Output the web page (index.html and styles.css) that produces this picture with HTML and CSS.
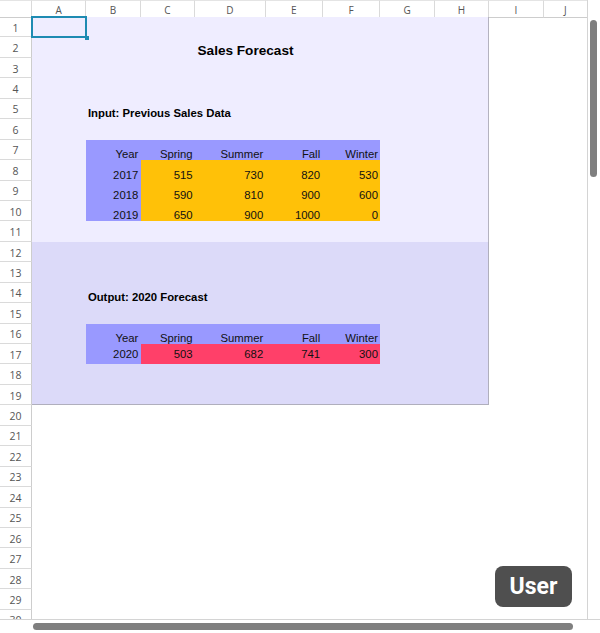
FILE: index.html
```html
<!DOCTYPE html>
<html lang="en">
<head>
<meta charset="utf-8">
<title>Sales Forecast</title>
<link rel="stylesheet" href="styles.css">
</head>
<body>
<div class="app">
  <div class="main">
    <div class="grid-area">
      <div class="colheads">
        <div class="corner"></div>
        <div class="ch">A</div>
        <div class="ch">B</div>
        <div class="ch">C</div>
        <div class="ch">D</div>
        <div class="ch">E</div>
        <div class="ch">F</div>
        <div class="ch">G</div>
        <div class="ch">H</div>
        <div class="ch">I</div>
        <div class="ch last">J</div>
      </div>
      <div class="body">
        <div class="rowheads">
          <div class="rh">1</div><div class="rh">2</div><div class="rh">3</div><div class="rh">4</div><div class="rh">5</div>
          <div class="rh">6</div><div class="rh">7</div><div class="rh">8</div><div class="rh">9</div><div class="rh">10</div>
          <div class="rh">11</div><div class="rh">12</div><div class="rh">13</div><div class="rh">14</div><div class="rh">15</div>
          <div class="rh">16</div><div class="rh">17</div><div class="rh">18</div><div class="rh">19</div><div class="rh">20</div>
          <div class="rh">21</div><div class="rh">22</div><div class="rh">23</div><div class="rh">24</div><div class="rh">25</div>
          <div class="rh">26</div><div class="rh">27</div><div class="rh">28</div><div class="rh">29</div><div class="rh">30</div>
        </div>
        <div class="canvas">
          <div class="region region-in"></div>
          <div class="region region-out"></div>
          <div class="title">Sales Forecast</div>
          <div class="label label-in">Input: Previous Sales Data</div>
          <div class="table table-in">
            <div class="c hd">Year</div><div class="c hd">Spring</div><div class="c hd">Summer</div><div class="c hd">Fall</div><div class="c hd">Winter</div>
            <div class="c hd">2017</div><div class="c gd">515</div><div class="c gd">730</div><div class="c gd">820</div><div class="c gd">530</div>
            <div class="c hd">2018</div><div class="c gd">590</div><div class="c gd">810</div><div class="c gd">900</div><div class="c gd">600</div>
            <div class="c hd">2019</div><div class="c gd">650</div><div class="c gd">900</div><div class="c gd">1000</div><div class="c gd">0</div>
          </div>
          <div class="label label-out">Output: 2020 Forecast</div>
          <div class="table table-out">
            <div class="c hd">Year</div><div class="c hd">Spring</div><div class="c hd">Summer</div><div class="c hd">Fall</div><div class="c hd">Winter</div>
            <div class="c hd mid">2020</div><div class="c rd mid">503</div><div class="c rd mid">682</div><div class="c rd mid">741</div><div class="c rd mid">300</div>
          </div>
          <div class="sel"></div>
        </div>
      </div>
    </div>
    <div class="vscroll"><div class="vthumb"></div></div>
  </div>
  <div class="hscroll"><div class="hthumb"></div></div>
  <div class="badge">User</div>
</div>
</body>
</html>
```
FILE: styles.css
```css
:root {
  --cols: 54.4px 54.4px 54.4px 70.55px 56.95px 57.8px 54.4px 54.4px 54.4px 1fr;
  --rh: 20.45px;
}

* { box-sizing: border-box; }

body {
  margin: 0;
  background: #fff;
}

.app {
  position: relative;
  width: 600px;
  height: 633px;
  overflow: hidden;
  background: #fff;
  font-family: "Liberation Sans", Arial, sans-serif;
}

.main {
  display: flex;
  height: 619px;
}

.grid-area {
  width: 587px;
  flex: none;
  display: flex;
  flex-direction: column;
  overflow: hidden;
}

.colheads {
  display: grid;
  grid-template-columns: 32px var(--cols);
  height: 17px;
  flex: none;
}

.colheads > div {
  border-top: 1px solid #e4e4e4;
  border-right: 1px solid #dadada;
  border-bottom: 1px solid #cdcdcd;
  display: flex;
  align-items: center;
  justify-content: center;
  font-family: "Open Sans", "DejaVu Sans", sans-serif;
  font-size: 10px;
  color: #555;
  padding-top: 2px;
}

.colheads > .last { border-right: none; }

.body {
  display: flex;
  flex: 1;
  min-height: 0;
}

.rowheads {
  width: 32px;
  flex: none;
  display: flex;
  flex-direction: column;
}

.rh {
  height: var(--rh);
  flex: none;
  border-right: 1px solid #cdcdcd;
  border-bottom: 1px solid #dadada;
  display: flex;
  align-items: center;
  justify-content: center;
  padding-top: 2px;
  font-family: "Open Sans", "DejaVu Sans", sans-serif;
  font-size: 10.5px;
  color: #555;
}

.canvas {
  flex: 1;
  display: grid;
  grid-template-columns: var(--cols);
  grid-template-rows: repeat(30, var(--rh));
}

.region-in {
  grid-area: 1 / 1 / 12 / 9;
  background: #efedff;
  border-right: 1px solid #b4b3c0;
}

.region-out {
  grid-area: 12 / 1 / 20 / 9;
  background: #dcdaf9;
  border-right: 1px solid #b0afbd;
  border-bottom: 1px solid #b0afbd;
}

.title {
  grid-area: 2 / 1 / 3 / 9;
  padding-left: 165.5px;
  display: flex;
  align-items: flex-end;
  font-weight: bold;
  font-size: 13.6px;
  line-height: 15px;
  color: #000;
}

.label {
  display: flex;
  align-items: flex-end;
  padding-left: 1.5px;
  font-weight: bold;
  font-size: 11.33px;
  line-height: 11px;
  color: #000;
  white-space: nowrap;
}

.label-in { grid-area: 5 / 2 / 6 / 7; }
.label-out { grid-area: 14 / 2 / 15 / 7; }

.table {
  display: grid;
  grid-template-columns: 54.4px 54.4px 70.55px 56.95px 57.8px;
  grid-auto-rows: var(--rh);
}

.table-in { grid-area: 7 / 2 / 11 / 7; }
.table-out { grid-area: 16 / 2 / 18 / 7; }

.c {
  display: flex;
  align-items: flex-end;
  justify-content: flex-end;
  padding-right: 2.5px;
  font-size: 11.33px;
  line-height: 11px;
  color: #111;
}

.c.mid {
  align-items: center;
  line-height: 13px;
}

.hd { background: #9999ff; }
.gd { background: #ffc108; }
.rd { background: #ff4069; }

.sel {
  grid-area: 1 / 1 / 2 / 2;
  margin: -1.5px -1px -1px -1.5px;
  border: 2px solid #1e8bb2;
  position: relative;
}

.sel::after {
  content: "";
  position: absolute;
  right: -3.5px;
  bottom: -3.5px;
  width: 4px;
  height: 4px;
  background: #1e8bb2;
}

.vscroll {
  width: 13px;
  flex: none;
  border-left: 1px solid #d4d4d4;
  padding: 20px 0 0 1.5px;
}

.vthumb {
  width: 7px;
  height: 157px;
  border-radius: 4px;
  background: #7f7f7f;
}

.hscroll {
  height: 14px;
  border-top: 1px solid #d4d4d4;
  padding: 3px 0 0 33px;
}

.hthumb {
  width: 540px;
  height: 7px;
  border-radius: 4px;
  background: #7f7f7f;
}

.badge {
  position: absolute;
  right: 28px;
  bottom: 26px;
  width: 77px;
  height: 41px;
  border-radius: 8px;
  background: #4f4f4f;
  color: #fff;
  display: flex;
  align-items: center;
  justify-content: center;
  font-family: Roboto, "Liberation Sans", sans-serif;
  font-weight: 700;
  font-size: 23px;
}
```
